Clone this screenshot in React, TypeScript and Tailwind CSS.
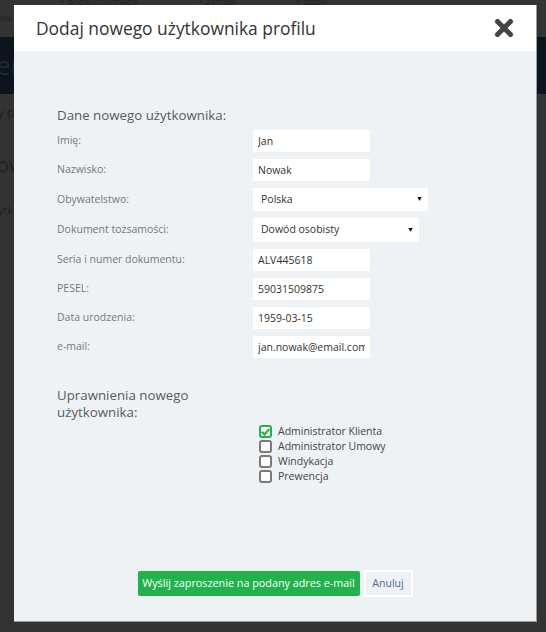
import React from "react";

const font = { fontFamily: '"Open Sans", "Liberation Sans", sans-serif' };

type Field = { label: string; value: string; kind: "text" | "select"; width?: string; h?: string };

const fields: Field[] = [
  { label: "Imię:", value: "Jan", kind: "text" },
  { label: "Nazwisko:", value: "Nowak", kind: "text" },
  { label: "Obywatelstwo:", value: "Polska", kind: "select", width: "w-[175px]", h: "h-[23px]" },
  { label: "Dokument tożsamości:", value: "Dowód osobisty", kind: "select", width: "w-[166px]", h: "h-[24px]" },
  { label: "Seria i numer dokumentu:", value: "ALV445618", kind: "text" },
  { label: "PESEL:", value: "59031509875", kind: "text" },
  { label: "Data urodzenia:", value: "1959-03-15", kind: "text" },
  { label: "e-mail:", value: "jan.nowak@email.com", kind: "text" },
];

const roles = [
  { name: "Administrator Klienta", checked: true },
  { name: "Administrator Umowy", checked: false },
  { name: "Windykacja", checked: false },
  { name: "Prewencja", checked: false },
];

function Row({ f }: { f: Field }) {
  return (
    <div className="flex items-center">
      <label className="w-[196px] shrink-0 text-[10.5px] text-[#777]">{f.label}</label>
      {f.kind === "text" ? (
        <input
          readOnly
          defaultValue={f.value}
          className="h-[22px] w-[117px] bg-white px-[5px] text-[10.5px] text-[#333] outline-none"
          style={font}
        />
      ) : (
        <div
          className={`flex ${f.h} ${f.width} items-center justify-between bg-white pl-[8px] pr-[5px] text-[10.5px] text-[#333]`}
        >
          <span>{f.value}</span>
          <span className="text-[7px] text-black">▼</span>
        </div>
      )}
    </div>
  );
}

function Checkbox({ checked }: { checked: boolean }) {
  if (checked) {
    return (
      <span className="flex h-[13px] w-[13px] items-center justify-center rounded-[3px] border-2 border-[#22b14c] bg-white">
        <svg width="9" height="8" viewBox="0 0 9 8">
          <path d="M0.8 3.8 L3.5 6.5 L8.2 1" fill="none" stroke="#22b14c" strokeWidth="2.2" />
        </svg>
      </span>
    );
  }
  return <span className="h-[13px] w-[13px] rounded-[3px] border-2 border-[#7a7a7a] bg-white" />;
}

export default function App() {
  return (
    <div className="relative h-[632px] w-[546px] overflow-hidden bg-[#333]" style={font}>
      {/* dimmed page behind the modal */}
      <div className="flex h-[37px] flex-col text-[#222]">
        <div className="flex h-[6px] items-end gap-[60px] pl-[60px] text-[9px] leading-none">
          <span>+ dodaj informację</span>
          <span>+ zamów</span>
          <span>+ dodaj</span>
        </div>
        <span className="pt-[8px] text-[8px] leading-none">ilto</span>
      </div>
      <div className="flex h-[57px] items-center bg-[#0c1420] text-[26px] text-[#1d2a38]">
        <span className="-ml-[4px]">en</span>
      </div>
      <div className="flex flex-col text-[#222]">
        <span className="-ml-[2px] pt-[10px] text-[12px]">y p</span>
        <span className="-ml-[3px] pt-[28px] text-[20px]">ow</span>
        <span className="-ml-[2px] pt-[22px] text-[11px]">ytk</span>
      </div>

      {/* modal */}
      <div className="absolute left-[14px] top-[5px] flex h-[617px] w-[523px] flex-col border-b border-r border-[#9a9a9a]">
        <div className="flex h-[46px] shrink-0 items-center justify-between bg-white pl-[22px] pr-[22px]">
          <h1 className="text-[17.4px] text-[#333]">Dodaj nowego użytkownika profilu</h1>
          <svg width="20" height="20" viewBox="0 0 20 20">
            <path d="M3.5 3.5 L16.5 16.5 M16.5 3.5 L3.5 16.5" stroke="#444" strokeWidth="5" strokeLinecap="round" />
          </svg>
        </div>
        <div className="flex flex-1 flex-col bg-[#eff2f5] pl-[43px] pt-[54px]">
          <h2 className="h-[20px] text-[13.3px] leading-[20px] text-[#5a5a5a]">Dane nowego użytkownika:</h2>
          <div className="mt-[5px] flex flex-col gap-[7px]">
            {fields.map((f) => (
              <Row key={f.label} f={f} />
            ))}
          </div>
          <h2 className="mt-[29px] w-[196px] text-[13.3px] leading-[17px] text-[#5a5a5a]">
            Uprawnienia nowego użytkownika:
          </h2>
          <div className="ml-[202px] mt-[3px] flex flex-col">
            {roles.map((r) => (
              <label key={r.name} className="flex h-[15px] items-center gap-[6px] text-[10.5px] text-[#444]">
                <Checkbox checked={r.checked} />
                {r.name}
              </label>
            ))}
          </div>
          <div className="mt-auto mb-[24px] -ml-[43px] flex items-center justify-center gap-[4px]">
            <button className="h-[25px] w-[222px] whitespace-nowrap rounded-[2px] bg-[#22b24c] text-[10.8px] text-white">
              Wyślij zaproszenie na podany adres e-mail
            </button>
            <button className="h-[27px] w-[49px] rounded-[2px] border-2 border-white text-[10.5px] text-[#4a6b96]">
              Anuluj
            </button>
          </div>
        </div>
      </div>
    </div>
  );
}
